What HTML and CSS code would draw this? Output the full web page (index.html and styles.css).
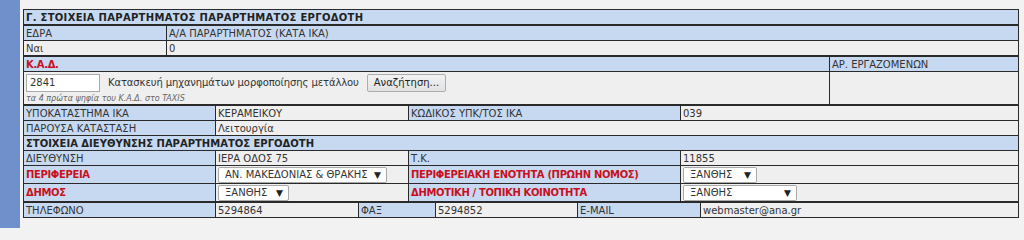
FILE: index.html
```html
<!DOCTYPE html>
<html lang="el">
<head>
<meta charset="utf-8">
<title>Στοιχεία παραρτήματος</title>
<link rel="stylesheet" href="styles.css">
</head>
<body>
<div class="page">
  <div class="strip"></div>
  <div class="content">
    <table class="grid">
      <tr><td class="hd head top">Γ. ΣΤΟΙΧΕΙΑ ΠΑΡΑΡΤΗΜΑΤΟΣ ΠΑΡΑΡΤΗΜΑΤΟΣ ΕΡΓΟΔΟΤΗ</td></tr>
    </table>
    <table class="grid">
      <colgroup><col class="c143"><col></colgroup>
      <tr><td class="hd">ΕΔΡΑ</td><td class="hd">Α/Α ΠΑΡΑΡΤΗΜΑΤΟΣ (ΚΑΤΑ ΙΚΑ)</td></tr>
      <tr><td class="val">Ναι</td><td class="val">0</td></tr>
    </table>
    <table class="grid">
      <colgroup><col class="c806"><col></colgroup>
      <tr><td class="hd req">Κ.Α.Δ.</td><td class="hd">ΑΡ. ΕΡΓΑΖΟΜΕΝΩΝ</td></tr>
      <tr>
        <td class="val kad">
          <div class="kadline">
            <input class="txt" type="text" value="2841">
            <span class="kaddesc">Κατασκευή μηχανημάτων μορφοποίησης μετάλλου</span>
            <button class="btn" type="button">Αναζήτηση...</button>
          </div>
          <div class="hint">τα 4 πρώτα ψηφία του Κ.Α.Δ. στο TAXIS</div>
        </td>
        <td class="val"></td>
      </tr>
    </table>
    <table class="grid">
      <colgroup><col class="c192"><col class="c193"><col class="c272"><col></colgroup>
      <tr><td class="hd">ΥΠΟΚΑΤΑΣΤΗΜΑ ΙΚΑ</td><td class="val">ΚΕΡΑΜΕΙΚΟΥ</td><td class="hd">ΚΩΔΙΚΟΣ ΥΠΚ/ΤΟΣ ΙΚΑ</td><td class="val">039</td></tr>
      <tr><td class="hd">ΠΑΡΟΥΣΑ ΚΑΤΑΣΤΑΣΗ</td><td class="val" colspan="3">Λειτουργία</td></tr>
      <tr><td class="hd head" colspan="4">ΣΤΟΙΧΕΙΑ ΔΙΕΥΘΥΝΣΗΣ ΠΑΡΑΡΤΗΜΑΤΟΣ ΕΡΓΟΔΟΤΗ</td></tr>
      <tr><td class="hd">ΔΙΕΥΘΥΝΣΗ</td><td class="val">ΙΕΡΑ ΟΔΟΣ 75</td><td class="hd">Τ.Κ.</td><td class="val">11855</td></tr>
      <tr class="selrow">
        <td class="hd req">ΠΕΡΙΦΕΡΕΙΑ</td>
        <td class="val"><div class="cell"><div class="sel sel-wide"><span>ΑΝ. ΜΑΚΕΔΟΝΙΑΣ &amp; ΘΡΑΚΗΣ</span><span class="arr">▼</span></div></div></td>
        <td class="hd req">ΠΕΡΙΦΕΡΕΙΑΚΗ ΕΝΟΤΗΤΑ (ΠΡΩΗΝ ΝΟΜΟΣ)</td>
        <td class="val"><div class="cell"><div class="sel sel-nomos"><span>ΞΑΝΘΗΣ</span><span class="arr">▼</span></div></div></td>
      </tr>
      <tr class="selrow">
        <td class="hd req">ΔΗΜΟΣ</td>
        <td class="val"><div class="cell"><div class="sel sel-dimos"><span>ΞΑΝΘΗΣ</span><span class="arr">▼</span></div></div></td>
        <td class="hd req">ΔΗΜΟΤΙΚΗ / ΤΟΠΙΚΗ ΚΟΙΝΟΤΗΤΑ</td>
        <td class="val"><div class="cell"><div class="sel sel-koin"><span>ΞΑΝΘΗΣ</span><span class="arr">▼</span></div></div></td>
      </tr>
    </table>
    <table class="grid">
      <colgroup><col class="c192"><col class="c143"><col class="c77"><col class="c142"><col class="c123"><col></colgroup>
      <tr><td class="hd">ΤΗΛΕΦΩΝΟ</td><td class="val">5294864</td><td class="hd">ΦΑΞ</td><td class="val">5294852</td><td class="hd">E-MAIL</td><td class="val">webmaster@ana.gr</td></tr>
    </table>
  </div>
</div>
</body>
</html>
```

FILE: styles.css
```css
html, body {
  margin: 0;
  padding: 0;
}
body {
  background: #f2f2f2;
  font-family: "DejaVu Sans", Verdana, sans-serif;
  font-size: 10px;
  color: #333;
}
.page {
  display: flex;
  height: 228px;
}
.strip {
  width: 20px;
  flex: none;
  background: #6f90cb;
}
.content {
  padding: 9px 0 0 3px;
  width: 996px;
}
.grid {
  width: 996px;
  border-collapse: collapse;
  table-layout: fixed;
  border: 1px solid #1e1e1e;
}
.grid td {
  border: 1px solid #2a2a2a;
  padding: 1px 2px 0 2px;
  height: 13px;
  line-height: 12px;
  white-space: nowrap;
  overflow: hidden;
  vertical-align: middle;
  text-align: left;
}
.c143 { width: 143px; }
.c806 { width: 806px; }
.c192 { width: 192px; }
.c193 { width: 193px; }
.c272 { width: 272px; }
.c77 { width: 77px; }
.c142 { width: 142px; }
.c123 { width: 123px; }
.hd {
  background: #c6d9f1;
}
.val {
  background: #efefef;
}
.head {
  font-weight: bold;
  color: #222;
}
.top {
  letter-spacing: 0.3px;
}
.req {
  color: #c81020;
  font-weight: bold;
  letter-spacing: -0.35px;
}
.kad {
  padding: 2px 2px 1px 2px;
  vertical-align: top;
}
.kadline {
  display: flex;
  align-items: center;
  gap: 8px;
  height: 19px;
}
.txt {
  width: 74px;
  height: 18px;
  box-sizing: border-box;
  border: 1px solid #ababab;
  background: #fff;
  font: 10px "DejaVu Sans", Verdana, sans-serif;
  color: #333;
  padding: 0 3px;
  margin: 0;
}
.kaddesc {
  color: #333;
  letter-spacing: -0.1px;
}
.btn {
  height: 18px;
  box-sizing: border-box;
  border: 1px solid #adadad;
  border-radius: 2px;
  background: linear-gradient(#f2f2f2, #e2e2e2);
  font: 10px "DejaVu Sans", Verdana, sans-serif;
  color: #222;
  padding: 0 6px;
  margin: 0;
}
.hint {
  font-size: 8px;
  font-style: italic;
  color: #666;
  line-height: 10px;
  margin-top: 2px;
}
.selrow td {
  height: 16px;
}
.cell {
  display: flex;
  justify-content: flex-start;
}
.sel {
  display: flex;
  flex: none;
  align-items: center;
  justify-content: space-between;
  box-sizing: border-box;
  height: 16px;
  margin: 0;
  border: 1px solid #a9a9a9;
  border-radius: 2px;
  background: #fff;
  padding: 0 5px 0 6px;
  color: #333;
}
.arr {
  font-size: 9px;
  color: #222;
}
.sel-wide { width: 169px; }
.sel-nomos { width: 74px; }
.sel-dimos { width: 71px; }
.sel-koin { width: 114px; }
```
